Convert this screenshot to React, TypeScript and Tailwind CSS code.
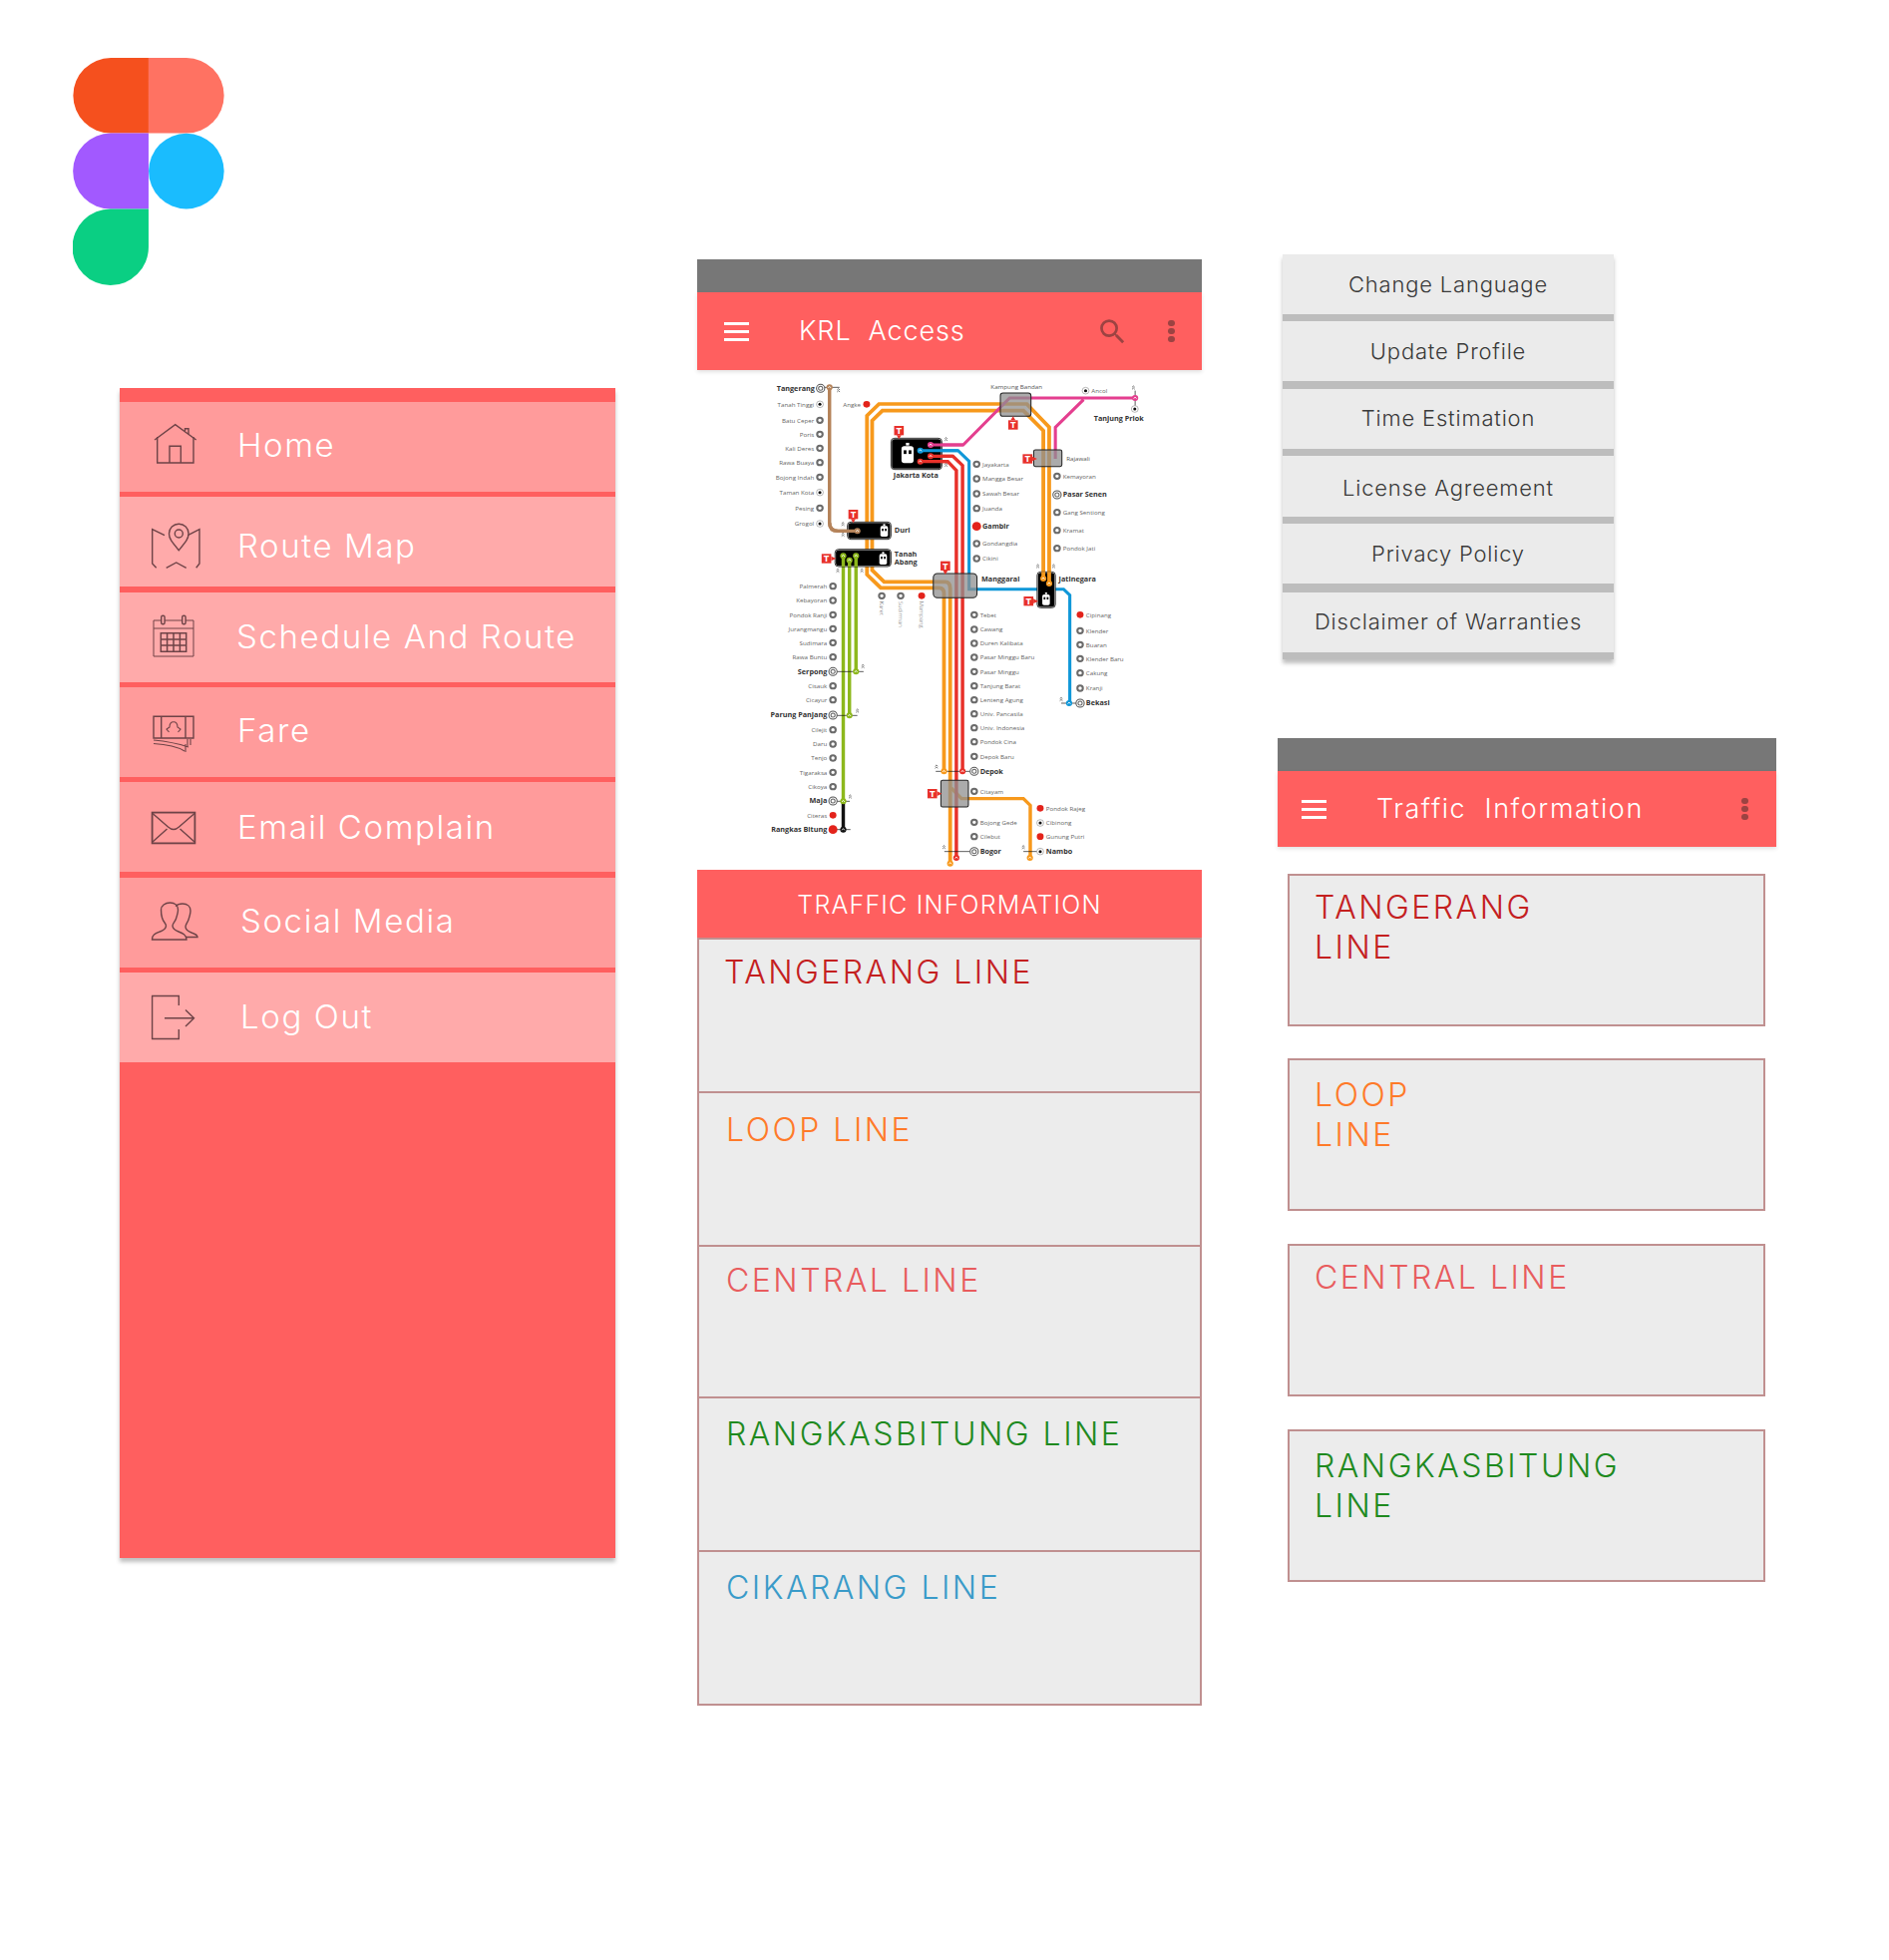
const menuRows = [
  { label: "Home", bg: "bg-[#ff9b9b]", text: "ml-[36px] pb-[2px]", icon: "home" },
  { label: "Route Map", bg: "bg-[#ffaaaa]", text: "ml-[36px] pt-[8px]", icon: "map" },
  { label: "Schedule And Route", bg: "bg-[#ffaaaa]", text: "ml-[35px] pt-[1px]", icon: "calendar" },
  { label: "Fare", bg: "bg-[#ff9b9b]", text: "ml-[36px] pb-[2px]", icon: "fare" },
  { label: "Email Complain", bg: "bg-[#ff9b9b]", text: "ml-[36px]", icon: "mail" },
  { label: "Social Media", bg: "bg-[#ff9b9b]", text: "ml-[39px] pb-[1px]", icon: "people" },
  { label: "Log Out", bg: "bg-[#ffaaaa]", text: "ml-[39px]", icon: "logout" },
]

const settings = [
  { label: "Change Language", row: "h-[60px]", bar: "h-[7px]" },
  { label: "Update Profile", row: "h-[60px]", bar: "h-[8px]" },
  { label: "Time Estimation", row: "h-[60px] pb-[1px]", bar: "h-[7px]" },
  { label: "License Agreement", row: "h-[61px] pt-[3px]", bar: "h-[7px]" },
  { label: "Privacy Policy", row: "h-[60px]", bar: "h-[9px]" },
  { label: "Disclaimer of Warranties", row: "h-[60px] pb-[1px]", bar: "h-[7px]" },
]

const lineRows = [
  { label: "TANGERANG LINE", color: "text-[#c4201f]", box: "h-[154px] pt-[13px] pl-[25px]" },
  { label: "LOOP LINE", color: "text-[#ff7a29]", box: "h-[154px] pt-[17px] pl-[27px]" },
  { label: "CENTRAL LINE", color: "text-[#e85c5e]", box: "h-[152px] pt-[14px] pl-[27px]" },
  { label: "RANGKASBITUNG LINE", color: "text-[#1f8a1f]", box: "h-[154px] pt-[16px] pl-[27px]" },
  { label: "CIKARANG LINE", color: "text-[#3a9bc9]", box: "h-[154px] pt-[16px] pl-[27px]" },
]

const lineCards = [
  { lines: ["TANGERANG", "LINE"], color: "text-[#c4201f]", box: "pt-[12px]" },
  { lines: ["LOOP", "LINE"], color: "text-[#ff7a29]", box: "mt-[32px] pt-[15px]" },
  { lines: ["CENTRAL LINE"], color: "text-[#e85c5e]", box: "mt-[33px] pt-[12px]" },
  { lines: ["RANGKASBITUNG", "LINE"], color: "text-[#1f8a1f]", box: "mt-[33px] pt-[15px]" },
]

const MenuIcon = ({ name }: { name: string }) => {
  const boxes: Record<string, string> = {
    home: "150 418 52 60",
    map: "150 513 52 60",
    calendar: "150 609 52 60",
    fare: "150 704 52 60",
    mail: "150 799 52 60",
    people: "150 895 52 60",
    logout: "150 990 52 60",
  }
  return (
    <svg viewBox={boxes[name]} className="w-[52px] h-[60px] shrink-0" fill="none" stroke="#6e4347" strokeWidth="1.4">
      {name === "home" && (
        <>
          <path d="M155 441 L175.7 425.7 L196.7 441" />
          <path d="M157.7 438 V464 H194 V438 M170 464 V447.3 H181.3 V464 M185.5 432 V429.8 H189 V435" />
        </>
      )}
      {name === "map" && (
        <>
          <path d="M165 536.7 L152.7 530.7 V565 L156.7 569.3 M166.7 569.3 L176.7 564 L186.7 569.3 M196.7 569.3 L200 565 V530.7 L188.3 536.7" />
          <path d="M179.3 551.7 C172 543 169.5 540 169.5 535 a9.8 9.8 0 0 1 19.6 0 C189 540 186.5 543 179.3 551.7 Z" />
          <circle cx="179.3" cy="535" r="4" />
        </>
      )}
      {name === "calendar" && (
        <>
          <path d="M154 622 H161.7 M165 622 H182.7 M186 622 H194 V658 H154 V622 M154 630 H194" strokeWidth="1" />
          <rect x="161.7" y="617.3" width="3.4" height="8.4" rx="1.5" />
          <rect x="182.7" y="617.3" width="3.4" height="8.4" rx="1.5" />
          <path d="M161.3 634.7 H186.7 V653.3 H161.3 Z M167.6 634.7 V653.3 M174 634.7 V653.3 M180.4 634.7 V653.3 M161.3 640.9 H186.7 M161.3 647.1 H186.7" strokeWidth="1.5" />
        </>
      )}
      {name === "fare" && (
        <>
          <path d="M154 718.3 H194 V740 H154 Z M161.7 718.3 V740 M186 718.3 V740" />
          <path d="M167 731 L170 729 C170 722 178 722 178 729 L181 731 L178.5 734 M170 729 L167 731 L169.5 734" strokeWidth="1.1" />
          <path d="M154 742 C165 743 177 745 189 749 M154 745.5 C163 746 177 748 185 753 M188 741 V749 M191 741 V747 M186 746 V754" strokeWidth="1.1" />
        </>
      )}
      {name === "mail" && (
        <>
          <rect x="152.6" y="814.6" width="42.8" height="30.8" strokeWidth="1.8" />
          <path d="M153 815.5 L168.5 829 Q174 834 179.5 829 L195 815.5 M153 844 L167.5 831 M180.5 831 L195 844" />
        </>
      )}
      {name === "people" && (
        <>
          <path d="M152.5 942 c0-5 3-6 8-8 c4-1.5 6-3 6-6 c0-2-3-4-4-8 c-1-3-1-6-1-8 c0-4 4-7 9-7 c5 0 8 3 8 7 c0 3-1 6-2 9 c-1 3-3.5 5-3.5 7 c0 3 2 4.5 6 6 c4 1.5 8 3 8 8 z" />
          <path d="M176 908.5 c1.5-1.5 4-2.5 7-2.5 c5 0 8 3 8 7 c0 3-1 6-2 9 c-1 3-3 5-3 7 c0 3 2 4.5 6 6 c3 1 6 2 6 4.5 H187" />
        </>
      )}
      {name === "logout" && <path d="M179.3 1008 V998.5 H152.6 V1041.5 H179.3 V1032 M165 1020.7 H194.5 M186 1012.5 L194.5 1020.7 L186 1029" />}
    </svg>
  )
}

const Figma = () => (
  <svg viewBox="0 0 151.3 228" className="w-[152px] h-[228px]">
    <path fill="#f5501e" d="M75.6 0 H37.8 a37.8 37.8 0 0 0 0 75.6 H75.6 Z" />
    <path fill="#ff7262" d="M75.6 0 H113.5 a37.8 37.8 0 0 1 0 75.6 H75.6 Z" />
    <path fill="#a259ff" d="M75.6 75.6 H37.8 a37.8 37.8 0 0 0 0 76 H75.6 Z" />
    <circle fill="#1abcfe" cx="113.5" cy="113.6" r="37.8" />
    <path fill="#0acf83" d="M75.6 151.6 H37.8 a38.2 38.2 0 1 0 37.8 38.2 Z" />
  </svg>
)

const Burger = () => (
  <div className="flex flex-col gap-[5px] w-[25px] shrink-0">
    <div className="h-[3px] bg-white" />
    <div className="h-[3px] bg-white" />
    <div className="h-[3px] bg-white" />
  </div>
)

const Dots = () => (
  <div className="flex flex-col gap-[2px] w-[7px] shrink-0">
    <div className="h-[6px] rounded-full bg-[#9c4342]" />
    <div className="h-[6px] rounded-full bg-[#9c4342]" />
    <div className="h-[6px] rounded-full bg-[#9c4342]" />
  </div>
)

type Station = [number, number, string, "l" | "r", "ring" | "red" | "dot" | "big", boolean?]

const stations: Station[] = [
  [385, 418, "Tangerang", "l", "big", true],
  [383, 466, "Tanah Tinggi", "l", "dot"],
  [383, 514, "Batu Ceper", "l", "ring"],
  [383, 556, "Poris", "l", "ring"],
  [383, 598, "Kali Deres", "l", "ring"],
  [383, 641, "Rawa Buaya", "l", "ring"],
  [383, 685, "Bojong Indah", "l", "ring"],
  [383, 731, "Taman Kota", "l", "dot"],
  [383, 778, "Pesing", "l", "ring"],
  [383, 825, "Grogol", "l", "dot"],
  [519, 466, "Angke", "l", "red"],
  [839, 646, "Jayakarta", "r", "ring"],
  [839, 690, "Mangga Besar", "r", "ring"],
  [839, 735, "Sawah Besar", "r", "ring"],
  [839, 779, "Juanda", "r", "ring"],
  [839, 833, "Gambir", "r", "red", true],
  [839, 885, "Gondangdia", "r", "ring"],
  [839, 930, "Cikini", "r", "ring"],
  [1073, 682, "Kemayoran", "r", "ring"],
  [1073, 738, "Pasar Senen", "r", "big", true],
  [1073, 791, "Gang Sentiong", "r", "ring"],
  [1073, 845, "Kramat", "r", "ring"],
  [1073, 899, "Pondok Jati", "r", "ring"],
  [1156, 425, "Ancol", "r", "dot"],
  [421, 1013, "Palmerah", "l", "ring"],
  [421, 1056, "Kebayoran", "l", "ring"],
  [421, 1099, "Pondok Ranji", "l", "ring"],
  [421, 1141, "Jurangmangu", "l", "ring"],
  [421, 1183, "Sudimara", "l", "ring"],
  [421, 1226, "Rawa Buntu", "l", "ring"],
  [421, 1270, "Serpong", "l", "big", true],
  [421, 1313, "Cisauk", "l", "ring"],
  [421, 1355, "Cicayur", "l", "ring"],
  [421, 1401, "Parung Panjang", "l", "big", true],
  [421, 1445, "Cilejit", "l", "ring"],
  [421, 1488, "Daru", "l", "ring"],
  [421, 1530, "Tenjo", "l", "ring"],
  [421, 1573, "Tigaraksa", "l", "ring"],
  [421, 1616, "Cikoya", "l", "ring"],
  [421, 1659, "Maja", "l", "big", true],
  [421, 1702, "Citeras", "l", "red"],
  [421, 1745, "Rangkas Bitung", "l", "red", true],
  [832, 1099, "Tebet", "r", "ring"],
  [832, 1143, "Cawang", "r", "ring"],
  [832, 1185, "Duren Kalibata", "r", "ring"],
  [832, 1227, "Pasar Minggu Baru", "r", "ring"],
  [832, 1270, "Pasar Minggu", "r", "ring"],
  [832, 1313, "Tanjung Barat", "r", "ring"],
  [832, 1355, "Lenteng Agung", "r", "ring"],
  [832, 1397, "Univ. Pancasila", "r", "ring"],
  [832, 1439, "Univ. Indonesia", "r", "ring"],
  [832, 1481, "Pondok Cina", "r", "ring"],
  [832, 1525, "Depok Baru", "r", "ring"],
  [832, 1570, "Depok", "r", "big", true],
  [832, 1630, "Citayam", "r", "ring"],
  [832, 1723, "Bojong Gede", "r", "ring"],
  [832, 1766, "Cilebut", "r", "ring"],
  [832, 1811, "Bogor", "r", "big", true],
  [1140, 1099, "Cipinang", "r", "red"],
  [1140, 1147, "Klender", "r", "ring"],
  [1140, 1189, "Buaran", "r", "ring"],
  [1140, 1231, "Klender Baru", "r", "ring"],
  [1140, 1274, "Cakung", "r", "ring"],
  [1140, 1320, "Kranji", "r", "ring"],
  [1140, 1365, "Bekasi", "r", "big", true],
  [1024, 1681, "Pondok Rajeg", "r", "red"],
  [1024, 1725, "Cibinong", "r", "dot"],
  [1024, 1766, "Gunung Putri", "r", "red"],
  [1024, 1811, "Nambo", "r", "dot", true],
]

const tracks: [string, string, number][] = [
  ["M411 415 V822 Q411 847 436 847 H492", "#b5835a", 10],
  ["M905 485 H565 L535 515 V965 L570 1000 H748 Q762 1000 762 1020 V1847", "#f7991c", 11],
  ["M905 465 H555 L520 500 V978 L560 1018 H730 Q744 1018 744 1035 V1570", "#f7991c", 11],
  ["M905 465 H985 L1050 535 V1000", "#f7991c", 11],
  ["M905 485 H975 L1033 545 V985", "#f7991c", 11],
  ["M765 1620 L795 1652 H975 L995 1672 V1830", "#f7991c", 10],
  ["M675 638 H755 L780 665 V1830", "#e8312a", 10],
  ["M705 622 H770 L798 650 V1570", "#e8312a", 10],
  ["M675 605 H785 L817 637 V1022 H1092 L1110 1040 V1365", "#0f97d8", 9],
  ["M705 588 H800 L935 447 H1300 M1150 452 L1068 535 V630", "#e43f8f", 9],
  ["M451 922 V1660", "#8db81c", 10],
  ["M469 935 V1402", "#8db81c", 10],
  ["M488 922 V1270", "#8db81c", 10],
  ["M451 1660 V1745", "#111111", 10],
]

const ticks = [
  "M395 415 H440",
  "M430 1270 H510",
  "M430 1402 H492",
  "M430 1660 H470",
  "M430 1745 H472",
  "M720 1570 H820",
  "M745 1811 H820",
  "M975 1811 H1015",
  "M1085 1365 H1130",
  "M1300 425 V470",
]

// small ">>" marks next to the line ends
const chevrons: [number, number][] = [
  [437, 428], [750, 575], [750, 652], [450, 830], [450, 862], [435, 970], [505, 970], [1017, 957], [1063, 957],
  [508, 1258], [492, 1392], [471, 1650], [722, 1560], [744, 1802], [975, 1802], [1085, 1357], [1295, 420],
]

const ends: [number, number, string][] = [
  [411, 415, "#b5835a"], [492, 847, "#b5835a"], [451, 922, "#8db81c"], [469, 935, "#8db81c"], [488, 922, "#8db81c"],
  [488, 1270, "#8db81c"], [469, 1402, "#8db81c"], [451, 1660, "#8db81c"], [451, 1745, "#111111"],
  [705, 588, "#e43f8f"], [1300, 447, "#e43f8f"], [675, 605, "#0f97d8"], [1108, 1365, "#0f97d8"],
  [705, 622, "#e8312a"], [675, 638, "#e8312a"], [798, 1570, "#e8312a"], [780, 1830, "#e8312a"],
  [744, 1570, "#f7991c"], [762, 1847, "#f7991c"], [994, 1830, "#f7991c"], [1033, 990, "#f7991c"], [1050, 1005, "#f7991c"],
]

const signs: [number, number, "up" | "down" | "right"][] = [
  [613, 545, "down"],
  [480, 797, "down"],
  [402, 930, "right"],
  [748, 952, "down"],
  [945, 528, "up"],
  [987, 630, "right"],
  [990, 1058, "right"],
  [710, 1637, "right"],
]

const labels: [number, number, string, boolean?][] = [
  [880, 421, "Kampung Bandan"],
  [1100, 637, "Rajawali"],
  [1180, 515, "Tanjung Priok", true],
  [597, 686, "Jakarta Kota", true],
  [600, 853, "Duri", true],
  [600, 925, "Tanah", true],
  [600, 949, "Abang", true],
  [853, 1000, "Manggarai", true],
  [1078, 1000, "Jatinegara", true],
]

const blackBoxes = [
  [590, 568, 148, 94],
  [463, 820, 127, 52],
  [427, 902, 163, 52],
  [1015, 970, 53, 108],
]

const grayBoxes = [
  [908, 432, 89, 70, 8],
  [1005, 603, 82, 50, 5],
  [713, 975, 127, 73, 12],
  [735, 1597, 80, 80, 5],
]

const RouteMap = () => (
  <svg viewBox="26 363 1468 1503" preserveAspectRatio="none" className="w-[506px] h-[501px] block font-['Open_Sans',sans-serif]">
    {tracks.map(([d, color, w]) => (
      <path key={d} d={d} fill="none" stroke={color} strokeWidth={w} />
    ))}
    {ticks.map((d) => (
      <path key={d} d={d} fill="none" stroke="#111111" strokeWidth="2" />
    ))}
    {chevrons.map(([x, y]) => (
      <path
        key={`${x}-${y}`}
        d={`M${x - 4} ${y - 5} L${x} ${y - 9} L${x + 4} ${y - 5} M${x - 4} ${y + 1} L${x} ${y - 3} L${x + 4} ${y + 1}`}
        fill="none"
        stroke="#222222"
        strokeWidth="1.8"
      />
    ))}
    {blackBoxes.map(([x, y, w, h]) => (
      <g key={x}>
        <rect x={x} y={y} width={w} height={h} rx="10" fill="#ffffff" stroke="#111111" strokeWidth="2.5" />
        <rect x={x + 2.5} y={y + 2.5} width={w - 5} height={h - 5} rx="8" fill="#000000" />
      </g>
    ))}
    <path d="M705 588 H800" stroke="#e43f8f" strokeWidth="9" />
    <path d="M675 605 H785" stroke="#0f97d8" strokeWidth="9" />
    <path d="M705 622 H770 M675 638 H755" stroke="#e8312a" strokeWidth="10" />
    <path d="M411 822 Q411 847 436 847 H492" fill="none" stroke="#b5835a" strokeWidth="10" />
    <path d="M451 922 V954 M469 935 V954 M488 922 V954" stroke="#8db81c" strokeWidth="10" />
    <path d="M1050 970 V1005 M1033 970 V990" stroke="#f7991c" strokeWidth="11" />
    {grayBoxes.map(([x, y, w, h, r]) => (
      <rect key={x} x={x} y={y} width={w} height={h} rx={r} fill="#8f8f8f" fillOpacity="0.75" stroke="#222222" strokeWidth="3" />
    ))}
    {[[638, 617, 1.6], [570, 848, 1], [567, 932, 1], [1041, 1054, 1]].map(([x, y, s]) => (
      <g key={x} transform={`translate(${x} ${y}) scale(${s})`}>
        <rect x="-11" y="-16" width="22" height="32" rx="5" fill="#ffffff" />
        <rect x="-7" y="-8" width="5" height="7" fill="#000000" />
        <rect x="2" y="-8" width="5" height="7" fill="#000000" />
        <rect x="-3" y="-22" width="6" height="5" fill="#ffffff" />
      </g>
    ))}
    {ends.map(([x, y, color]) => (
      <g key={`${x}-${y}`}>
        <circle cx={x} cy={y} r="9" fill={color} />
        <path d={`M${x - 4} ${y + 2} L${x} ${y - 3} L${x + 4} ${y + 2}`} fill="none" stroke="#ffffff" strokeWidth="2.5" />
      </g>
    ))}
    {signs.map(([x, y, dir]) => (
      <g key={`${x}-${y}`}>
        {dir === "down" && <path d={`M${x - 7} ${y + 14} H${x + 7} L${x} ${y + 26} Z`} fill="#e8312a" />}
        {dir === "up" && <path d={`M${x - 7} ${y - 14} H${x + 7} L${x} ${y - 26} Z`} fill="#e8312a" />}
        {dir === "right" && <path d={`M${x + 14} ${y - 7} V${y + 7} L${x + 28} ${y} Z`} fill="#e8312a" />}
        <rect x={x - 14} y={y - 14} width="28" height="28" fill="#e8312a" />
        <text x={x} y={y + 10} textAnchor="middle" fontSize="28" fontWeight="700" fill="#ffffff">T</text>
      </g>
    ))}
    {stations.map(([x, y, name, side, kind, bold]) => (
      <g key={name}>
        {kind === "red" && <circle cx={x} cy={y} r={bold ? 13 : 10} fill="#e3231b" />}
        {kind === "ring" && <circle cx={x} cy={y} r="8" fill="#ffffff" stroke="#6b6b6b" strokeWidth="6" />}
        {kind === "big" && (
          <>
            <circle cx={x} cy={y} r="12" fill="#ffffff" stroke="#555555" strokeWidth="3" />
            <circle cx={x} cy={y} r="6" fill="#ffffff" stroke="#666666" strokeWidth="3" />
          </>
        )}
        {kind === "dot" && (
          <>
            <circle cx={x} cy={y} r="10" fill="#ffffff" stroke="#777777" strokeWidth="1.5" />
            <circle cx={x} cy={y} r="4.5" fill="#111111" />
          </>
        )}
        <text
          x={side === "l" ? x - 17 : x + 17}
          y={y + 7}
          textAnchor={side === "l" ? "end" : "start"}
          fontSize={bold ? 21 : 18}
          fontWeight={bold ? 700 : 400}
          fill={bold ? "#333333" : "#666666"}
        >
          {name}
        </text>
      </g>
    ))}
    {[[563, "Karet"], [618, "Sudirman"], [679, "Mampang"]].map(([x, name]) => (
      <g key={name}>
        {name === "Mampang" ? (
          <circle cx={x as number} cy="1042" r="10" fill="#e3231b" />
        ) : (
          <circle cx={x as number} cy="1042" r="8" fill="#ffffff" stroke="#6b6b6b" strokeWidth="6" />
        )}
        <text transform={`translate(${(x as number) - 6} 1058) rotate(90)`} fontSize="18" fill="#666666">{name}</text>
      </g>
    ))}
    <g>
      <circle cx="1299" cy="480" r="10" fill="#ffffff" stroke="#777777" strokeWidth="1.5" />
      <circle cx="1299" cy="480" r="4.5" fill="#111111" />
    </g>
    {labels.map(([x, y, name, bold]) => (
      <text key={name} x={x} y={y} fontSize={bold ? 21 : 18} fontWeight={bold ? 700 : 400} fill={bold ? "#333333" : "#555555"}>
        {name}
      </text>
    ))}
  </svg>
)

export default function App() {
  return (
    <div className="w-[1894px] h-[1965px] bg-white flex items-start pl-[73px] font-['Inter',sans-serif] font-light">
      <div className="w-[544px] shrink-0 pt-[58px]">
        <Figma />
        <div className="ml-[47px] mt-[103px] w-[497px] h-[1173px] bg-[#ff5f5f] pt-[14px] flex flex-col gap-[5.33px] shadow-[0_4px_4px_rgba(0,0,0,0.25)]">
          {menuRows.map((row) => (
            <div key={row.label} className={`h-[90px] pl-[30px] flex items-center text-white text-[33px] tracking-[1.6px] ${row.bg}`}>
              <MenuIcon name={row.icon} />
              <span className={row.text}>{row.label}</span>
            </div>
          ))}
        </div>
      </div>

      <div className="w-[506px] ml-[82px] mt-[260px] shrink-0">
        <div className="h-[33px] bg-[#777777]" />
        <div className="h-[78px] bg-[#ff5f5f] flex items-center px-[27px] text-white shadow-[0_2px_4px_rgba(0,0,0,0.12)]">
          <Burger />
          <span className="ml-[50px] text-[27px] tracking-[0.9px] whitespace-pre">KRL  Access</span>
          <svg viewBox="0 0 24 24" className="w-[33px] h-[33px] ml-auto mr-[39px] fill-[#9c4342]">
            <path d="M15.5 14h-.79l-.28-.27A6.471 6.471 0 0 0 16 9.5 6.5 6.5 0 1 0 9.5 16c1.61 0 3.09-.59 4.23-1.57l.27.28v.79l5 4.99L20.49 19l-4.99-5zm-6 0C7.01 14 5 11.99 5 9.5S7.01 5 9.5 5 14 7.01 14 9.5 11.99 14 9.5 14z" />
          </svg>
          <Dots />
        </div>
        <RouteMap />
        <div className="h-[68px] pt-[3px] bg-[#ff5f5f] flex items-center justify-center text-white text-[25px] tracking-[1.2px]">TRAFFIC INFORMATION</div>
        <div className="bg-[#ececec] border-x-2 border-t-2 border-[#c09090]">
          {lineRows.map((row) => (
            <div key={row.label} className={`border-b-2 border-[#c09090] text-[32px] leading-[40px] tracking-[2.5px] ${row.box} ${row.color}`}>
              {row.label}
            </div>
          ))}
        </div>
      </div>

      <div className="w-[500px] ml-[76px] mt-[255px] shrink-0">
        <div className="ml-[5px] w-[332px] bg-[#ebebeb] shadow-[0_4px_4px_rgba(0,0,0,0.25)] text-[#3a3a3a] text-[22px] font-[350] tracking-[0.8px]">
          {settings.map((item) => (
            <div key={item.label}>
              <div className={`${item.row} flex items-center justify-center`}>{item.label}</div>
              <div className={`${item.bar} bg-[#bdbdbd]`} />
            </div>
          ))}
        </div>
        <div className="mt-[79px] h-[33px] bg-[#777777]" />
        <div className="h-[76px] bg-[#ff5f5f] flex items-center pl-[24px] pr-[28px] text-white shadow-[0_2px_4px_rgba(0,0,0,0.12)]">
          <Burger />
          <span className="ml-[50px] text-[27px] tracking-[1.55px] whitespace-pre">Traffic  Information</span>
          <div className="ml-auto">
            <Dots />
          </div>
        </div>
        <div className="ml-[10px] w-[479px] mt-[27px]">
          {lineCards.map((card) => (
            <div key={card.lines[0]} className={`h-[153px] bg-[#ececec] border-2 border-[#c09090] pl-[25px] text-[32px] leading-[40px] tracking-[2.5px] ${card.box} ${card.color}`}>
              {card.lines.map((l) => (
                <div key={l}>{l}</div>
              ))}
            </div>
          ))}
        </div>
      </div>
    </div>
  )
}
